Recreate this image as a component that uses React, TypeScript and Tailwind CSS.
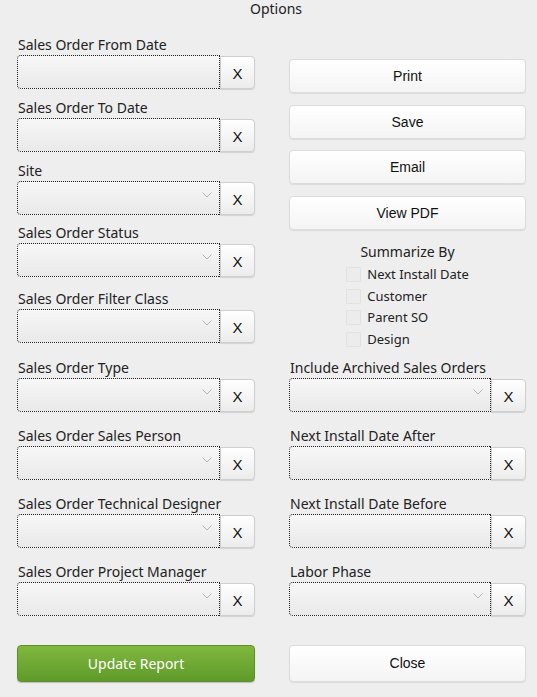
import React from 'react';

const FieldInput = ({ select }: { select?: boolean }) => (
  <div className="flex h-[34px]">
    <div className="relative flex-1 rounded-l-[4px] border border-dotted border-[#222] bg-gradient-to-b from-[#f7f7f7] to-[#e9e9e9]">
      {select && (
        <svg className="absolute right-[7px] top-[10px]" width="10" height="6" viewBox="0 0 10 6">
          <path d="M0.5 0.5 L5 5 L9.5 0.5" fill="none" stroke="#b5b5b5" strokeWidth="1" />
        </svg>
      )}
    </div>
    <button className="w-[35px] h-[33px] mt-[1px] rounded-r-[4px] border border-[#cfcfcf] bg-gradient-to-b from-white to-[#ececec] shadow-[0_1px_1px_rgba(0,0,0,0.12)] text-[15px] text-[#111] font-['Liberation_Sans',sans-serif] flex items-center justify-center pt-[3px]">
      X
    </button>
  </div>
);

const Field = ({ label, select, className }: { label: string; select?: boolean; className?: string }) => (
  <div className={className}>
    <div className="h-[20px] leading-[20px] text-[14px] text-[#222] pl-[1px]">{label}</div>
    <FieldInput select={select} />
  </div>
);

const PlainButton = ({ label, className }: { label: string; className?: string }) => (
  <button
    className={`w-full rounded-[4px] border border-[#dcdcdc] bg-gradient-to-b from-white to-[#f4f4f4] shadow-[0_1px_1px_rgba(0,0,0,0.08)] text-[14px] text-[#111] font-['Liberation_Sans',sans-serif] ${className ?? ''}`}
  >
    {label}
  </button>
);

const Check = ({ label }: { label: string }) => (
  <div className="flex items-center h-[21.6px] gap-[6px]">
    <span className="w-[15px] h-[15px] border border-[#e2e2e2] bg-[#ececec] rounded-[1px]" />
    <span className="text-[13px] text-[#222]">{label}</span>
  </div>
);

export default function App() {
  return (
    <div className="w-[537px] h-[697px] bg-[#eeeeee] font-['Noto_Sans',sans-serif] overflow-hidden">
      <div className="h-[18px] leading-[18px] text-center text-[14px] text-[#222] pl-[15px]">Options</div>
      <div className="flex px-[17px] gap-[34px] pr-[11px]">
        {/* left column */}
        <div className="w-[238px] shrink-0">
          <Field label="Sales Order From Date" className="mt-[17px]" />
          <Field label="Sales Order To Date" className="mt-[9px]" />
          <Field label="Site" select className="mt-[9px]" />
          <Field label="Sales Order Status" select className="mt-[8px]" />
          <Field label="Sales Order Filter Class" select className="mt-[12px]" />
          <Field label="Sales Order Type" select className="mt-[15px]" />
          <Field label="Sales Order Sales Person" select className="mt-[14px]" />
          <Field label="Sales Order Technical Designer" select className="mt-[14px]" />
          <Field label="Sales Order Project Manager" select className="mt-[14px]" />
          <button className="mt-[29px] w-full h-[37px] rounded-[4px] border border-[#5f8f2c] bg-gradient-to-b from-[#80b83e] to-[#5f9a2a] text-white text-[14px] shadow-[0_1px_1px_rgba(0,0,0,0.2)]">
            Update Report
          </button>
        </div>
        {/* right column */}
        <div className="flex-1">
          <PlainButton label="Print" className="mt-[41px] h-[34px]" />
          <PlainButton label="Save" className="mt-[12px] h-[34px]" />
          <PlainButton label="Email" className="mt-[11px] h-[34px]" />
          <PlainButton label="View PDF" className="mt-[12px] h-[34px]" />
          <div className="mt-[12px] text-center text-[14px] text-[#222] leading-[20px]">Summarize By</div>
          <div className="flex justify-center mt-[2px]">
            <div>
              <Check label="Next Install Date" />
              <Check label="Customer" />
              <Check label="Parent SO" />
              <Check label="Design" />
            </div>
          </div>
          <Field label="Include Archived Sales Orders" select className="mt-[8px]" />
          <Field label="Next Install Date After" className="mt-[14px]" />
          <Field label="Next Install Date Before" className="mt-[14px]" />
          <Field label="Labor Phase" select className="mt-[14px]" />
          <PlainButton label="Close" className="mt-[29px] h-[37px]" />
        </div>
      </div>
    </div>
  );
}
